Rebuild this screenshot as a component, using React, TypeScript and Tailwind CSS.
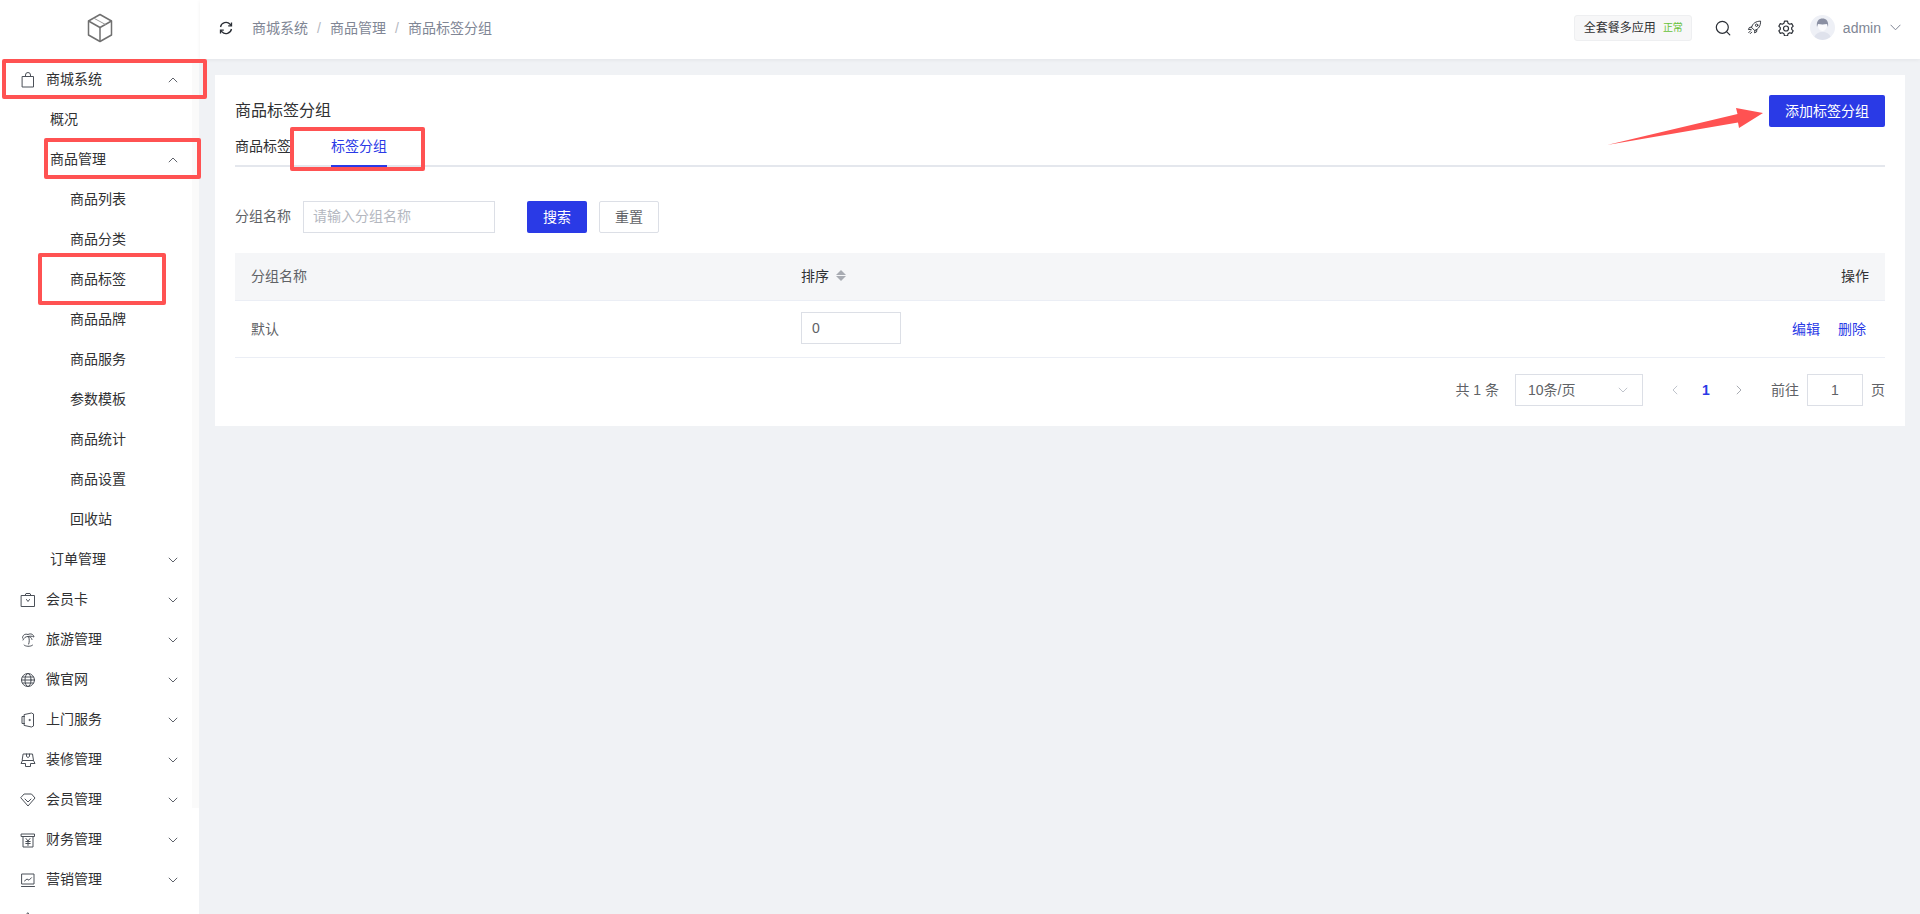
import React from "react";

const FONT = "font-['Liberation_Sans','Noto_Sans_CJK_SC',sans-serif]";

function Chevron({ up = false, className = "" }: { up?: boolean; className?: string }) {
  return (
    <svg width="10" height="6" viewBox="0 0 10 6" fill="none" stroke="currentColor" strokeWidth="1" className={className}>
      <polyline points={up ? "0.8,5.2 5,1 9.2,5.2" : "0.8,0.8 5,5 9.2,0.8"} />
    </svg>
  );
}

function Ico({ children }: { children: React.ReactNode }) {
  return (
    <svg width="16" height="16" viewBox="0 0 16 16" fill="none" stroke="#4b5058" strokeWidth="1" strokeLinejoin="round" strokeLinecap="round">
      {children}
    </svg>
  );
}

const icons: Record<string, React.ReactNode> = {
  bag: (
    <Ico>
      <path d="M2.500 4.500h11v10.500h-11z" />
      <path d="M5.500 4.500V3a2.500 2.500 0 0 1 5 0v1.500" />
    </Ico>
  ),
  card: (
    <Ico>
      <path d="M1.500 3.500h13v11h-13z" />
      <path d="M5 3.500l1-2h4l1 2" />
      <path d="M6.500 7.500l1.500 2 1.500-2" />
    </Ico>
  ),
  palm: (
    <Ico>
      <path d="M2.500 6C2.500 3 5 1.500 8 2.500 11 1 13.500 2.500 14 5c-2-1-4-1-6-.5" />
      <path d="M3 8c.8-2 2.500-3.500 5-3.500 2 .2 3.500 1 4 3" />
      <path d="M8.500 4.500c1 2.500 1 5 .2 7.500" />
      <path d="M4 13c1 1.500 6.500 2 8.500.2" />
    </Ico>
  ),
  globe: (
    <Ico>
      <circle cx="8" cy="8" r="6.500" />
      <ellipse cx="8" cy="8" rx="3" ry="6.500" />
      <path d="M1.500 8h13M2.500 5h11M2.500 11h11" />
    </Ico>
  ),
  door: (
    <Ico>
      <path d="M4.500 2.500l7-1.500 2 1v12l-2 1-7-1.500z" />
      <path d="M4.500 4.500H2v7h2.500" />
      <circle cx="9.500" cy="8" r=".6" />
    </Ico>
  ),
  roller: (
    <Ico>
      <path d="M3.500 2h9l1 6.500h-11z" />
      <path d="M2.500 8.500L1 11.500h4.500v3h5v-3H15l-1.500-3" />
      <path d="M6.500 2v2.500l1.500 1 1.500-1V2" />
    </Ico>
  ),
  gem: (
    <Ico>
      <path d="M4.500 2h7l3.500 4-7 8-7-8z" />
      <path d="M5 7l3 3 3-3" />
    </Ico>
  ),
  money: (
    <Ico>
      <path d="M1.500 2h13v2.500h-13z" />
      <path d="M3 4.500V15h10V4.500" />
      <path d="M6 6.500L8 9l2-2.500M5.800 9.500h4.400M5.800 11.500h4.400M8 9v4.500" />
    </Ico>
  ),
  chart: (
    <Ico>
      <path d="M2 2h12v10H2z" />
      <path d="M1.500 14.500h13" />
      <path d="M4.500 9l2.500-2 2 1.200 2.500-2.500" />
    </Ico>
  ),
  more: (
    <Ico>
      <path d="M8 1l3 4h-6z" />
    </Ico>
  ),
};

type Row = { label: string; level: 0 | 1 | 2; icon?: string; arrow?: "up" | "down" };

const rows: Row[] = [
  { label: "商城系统", level: 0, icon: "bag", arrow: "up" },
  { label: "概况", level: 1 },
  { label: "商品管理", level: 1, arrow: "up" },
  { label: "商品列表", level: 2 },
  { label: "商品分类", level: 2 },
  { label: "商品标签", level: 2 },
  { label: "商品品牌", level: 2 },
  { label: "商品服务", level: 2 },
  { label: "参数模板", level: 2 },
  { label: "商品统计", level: 2 },
  { label: "商品设置", level: 2 },
  { label: "回收站", level: 2 },
  { label: "订单管理", level: 1, arrow: "down" },
  { label: "会员卡", level: 0, icon: "card", arrow: "down" },
  { label: "旅游管理", level: 0, icon: "palm", arrow: "down" },
  { label: "微官网", level: 0, icon: "globe", arrow: "down" },
  { label: "上门服务", level: 0, icon: "door", arrow: "down" },
  { label: "装修管理", level: 0, icon: "roller", arrow: "down" },
  { label: "会员管理", level: 0, icon: "gem", arrow: "down" },
  { label: "财务管理", level: 0, icon: "money", arrow: "down" },
  { label: "营销管理", level: 0, icon: "chart", arrow: "down" },
  { label: "", level: 0, icon: "more" },
];

function MenuRow({ row }: { row: Row }) {
  return (
    <div className="relative flex h-10 shrink-0 items-center text-sm text-[#303133]">
      {row.level === 0 && (
        <>
          <span className="ml-5 flex w-[26px] shrink-0 items-center">{row.icon && icons[row.icon]}</span>
          <span className="pb-[2px]">{row.label}</span>
        </>
      )}
      {row.level === 1 && <span className="ml-[50px] pb-[2px]">{row.label}</span>}
      {row.level === 2 && <span className="ml-[70px] pb-[2px]">{row.label}</span>}
      {row.arrow && (
        <span className="absolute left-[168px] text-[#5f636b]">
          <Chevron up={row.arrow === "up"} className="block" />
        </span>
      )}
    </div>
  );
}

function Sidebar() {
  return (
    <aside className="flex h-full w-[200px] shrink-0 flex-col overflow-hidden bg-white">
      <div className="flex h-[60px] shrink-0 items-center justify-center pb-[4px]">
        <svg width="28" height="30" viewBox="0 0 28 30" fill="none" stroke="#707070" strokeWidth="1.500" strokeLinejoin="round">
          <path d="M14 1.500l11.500 6.500v14L14 28.500 2.500 22V8z" />
          <path d="M2.500 8L14 14.500 25.500 8" />
          <path d="M14 14.500v14" />
          <path d="M7.500 5l12 6.500" strokeWidth="1" stroke="#9a9a9a" />
        </svg>
      </div>
      <div className="flex min-h-0 flex-1">
        <nav className="w-[192px] shrink-0">
          {rows.map((r, i) => (
            <MenuRow key={i} row={r} />
          ))}
        </nav>
        <div className="h-[748px] w-[7px] shrink-0 bg-[#fafafa]" />
        <div className="h-full w-px shrink-0 bg-[#f0f2f5]" />
      </div>
    </aside>
  );
}

function Header() {
  return (
    <header className="relative flex h-[59px] shrink-0 items-center bg-white pb-[4px] pl-[19px] pr-[19px] shadow-[0_1px_4px_rgba(0,21,41,0.06)]">
      <svg width="14" height="14" viewBox="0 0 14 14" fill="none" stroke="#2b2f36" strokeWidth="1.300" className="mr-[19px]">
        <path d="M1.500 6a5.600 5.600 0 0 1 9.600-2.700L12.300 4.700" />
        <path d="M12.500 1.500v3.300H9.200" />
        <path d="M12.500 8a5.600 5.600 0 0 1-9.600 2.700L1.700 9.300" />
        <path d="M1.500 12.500V9.200h3.300" />
      </svg>
      <div className="flex items-center text-sm text-[#808695]">
        <span>商城系统</span>
        <span className="w-[22px] text-center text-[#b5b8bf]">/</span>
        <span>商品管理</span>
        <span className="w-[22px] text-center text-[#b5b8bf]">/</span>
        <span>商品标签分组</span>
      </div>
      <div className="ml-auto flex items-center">
        <div className="flex h-[26px] w-[118px] items-center rounded-[3px] border border-[#eeeff1] bg-[#f7f7f8] pl-[9px]">
          <span className="text-xs text-[#303133]">全套餐多应用</span>
          <span className="ml-[7px] text-[10px] text-[#67c23a]">正常</span>
        </div>
        <svg width="16" height="16" viewBox="0 0 16 16" fill="none" stroke="#2b2f36" strokeWidth="1.200" strokeLinecap="round" className="ml-[23px]">
          <circle cx="7.300" cy="7.300" r="6" />
          <path d="M11.800 11.800l3 3" />
        </svg>
        <svg width="15" height="15" viewBox="0 0 16 16" fill="none" stroke="#2b2f36" strokeWidth="1" strokeLinejoin="round" strokeLinecap="round" className="ml-[16px]">
          <path d="M5 7.500C6 3.500 9.500 1.300 14.500 1.200c0 5-2 8.600-6 9.800z" />
          <path d="M5 7.500L2.500 8l-1 2.200 3-.2M8.500 11l-.5 2.700 2.200-1 .3-2.500" />
          <circle cx="10.300" cy="5.600" r="1.300" />
          <path d="M3.800 11.500l-2 2M5 13l-1.500 1.500" />
        </svg>
        <svg width="16" height="16" viewBox="0 0 16 16" fill="none" stroke="#2b2f36" strokeWidth="1.200" strokeLinejoin="round" className="ml-[16px]">
          <path d="M6.500 1.200h3l.5 2 1.700 1 2-.6 1.500 2.600-1.500 1.500v1.600l1.500 1.500-1.500 2.600-2-.6-1.700 1-.5 2h-3l-.5-2-1.700-1-2 .6L.8 10.800l1.500-1.500V7.700L.8 6.200l1.500-2.600 2 .6 1.700-1z" />
          <circle cx="8" cy="8.500" r="2.500" />
        </svg>
        <svg width="25" height="25" viewBox="0 0 25 25" className="ml-[16px]">
          <circle cx="12.500" cy="12.500" r="12.500" fill="#eef0f6" />
          <path d="M7 12c-1-6 2-8.500 5.500-8.500S19 6 18 12l-1-3c-3 .5-6 .5-9 0z" fill="#8b90a3" />
          <path d="M8 9.500c3 .5 6 .5 9 0 .3 3.500-1.500 6.500-4.500 6.500S7.700 13 8 9.500z" fill="#fbfbfd" />
          <path d="M4.500 22c1-3.500 4-5 8-5s7 1.500 8 5a12.500 12.500 0 0 1-16 0z" fill="#dfe2ec" />
        </svg>
        <span className="ml-[8px] text-sm text-[#808695]">admin</span>
        <span className="ml-[9px] text-[#808695]">
          <svg width="11" height="7" viewBox="0 0 11 7" fill="none" stroke="currentColor" strokeWidth="1" className="block">
            <polyline points="0.600,0.800 5.500,5.800 10.400,0.800" />
          </svg>
        </span>
      </div>
    </header>
  );
}

function Caret() {
  return (
    <span className="ml-[7px] flex flex-col gap-[1px]">
      <span className="h-0 w-0 border-x-[5px] border-b-[5px] border-x-transparent border-b-[#a8abb2]" />
      <span className="h-0 w-0 border-x-[5px] border-t-[5px] border-x-transparent border-t-[#a8abb2]" />
    </span>
  );
}

function Content() {
  return (
    <section className="mx-[15px] mt-4 bg-white px-5 pb-5 pt-5">
      <div className="flex h-8 items-start justify-between">
        <h1 className="text-base leading-8 text-[#303133]">商品标签分组</h1>
        <button className="h-8 w-[116px] rounded-[2px] bg-[#2a3ae6] pb-[1px] text-sm text-white">添加标签分组</button>
      </div>

      <div className="flex h-10 items-center gap-10 border-b-2 border-[#e4e7ed] text-sm">
        <span className="text-[#303133]">商品标签</span>
        <span className="-mb-[2px] flex h-10 items-center border-b-2 border-[#2a3ae6] text-[#2a3ae6]">标签分组</span>
      </div>

      <div className="mt-[34px] flex items-center text-sm">
        <label className="pb-[2px] text-[#606266]">分组名称</label>
        <div className="ml-3 flex h-8 w-[192px] items-center border border-[#dcdfe6] pb-[2px] pl-[9px] text-[#b4b7bf]">请输入分组名称</div>
        <button className="ml-8 h-8 w-[60px] rounded-[2px] bg-[#2a3ae6] text-white">搜索</button>
        <button className="ml-3 h-8 w-[60px] rounded-[2px] border border-[#dcdfe6] bg-white text-[#606266]">重置</button>
      </div>

      <div className="mt-5 text-sm">
        <div className="grid h-[48px] grid-cols-[550px_1fr_auto] items-center border-b border-[#ebeef5] bg-[#f5f6f8] px-4 pb-[2px] text-[#303133]">
          <span className="text-[#606266]">分组名称</span>
          <span className="flex items-center">排序<Caret /></span>
          <span>操作</span>
        </div>
        <div className="grid h-[57px] grid-cols-[550px_1fr_auto] items-center border-b border-[#ebeef5] px-4 text-[#606266]">
          <span>默认</span>
          <span className="-mt-[2px] flex h-8 w-[100px] items-center border border-[#dcdfe6] pl-[10px]">0</span>
          <span className="flex gap-[18px] pr-[3px] text-[#2a3ae6]">
            <span>编辑</span>
            <span>删除</span>
          </span>
        </div>
      </div>

      <div className="mt-4 flex h-8 items-center justify-end text-sm text-[#606266]">
        <span>共 1 条</span>
        <div className="ml-4 flex h-8 w-[128px] items-center justify-between border border-[#dcdfe6] pl-[12px] pr-[14px]">
          <span>10条/页</span>
          <span className="text-[#c0c4cc]"><Chevron className="block" /></span>
        </div>
        <div className="ml-4 flex items-center">
          <span className="flex w-8 justify-center text-[#c0c4cc]">
            <svg width="6" height="10" viewBox="0 0 6 10" fill="none" stroke="currentColor"><polyline points="5.200,0.800 1,5 5.200,9.200" /></svg>
          </span>
          <span className="w-8 pr-[2px] text-center font-bold text-[#2a3ae6]">1</span>
          <span className="flex w-8 justify-center text-[#a8abb2]">
            <svg width="6" height="10" viewBox="0 0 6 10" fill="none" stroke="currentColor"><polyline points="0.800,0.800 5,5 0.800,9.200" /></svg>
          </span>
        </div>
        <span className="ml-4">前往</span>
        <span className="ml-2 flex h-8 w-14 items-center justify-center border border-[#dcdfe6]">1</span>
        <span className="ml-2">页</span>
      </div>
    </section>
  );
}

function Annotations() {
  const box = "pointer-events-none absolute rounded-[2px] border-4 border-[#ff5252]";
  return (
    <>
      <div className={`${box} left-[2px] top-[59px] h-[40px] w-[205px]`} />
      <div className={`${box} left-[44px] top-[138px] h-[41px] w-[157px]`} />
      <div className={`${box} left-[38px] top-[253px] h-[52px] w-[128px]`} />
      <div className={`${box} left-[290px] top-[127px] h-[44px] w-[135px]`} />
      <svg className="pointer-events-none absolute left-[1600px] top-[100px]" width="170" height="50" viewBox="0 0 170 50">
        <polygon points="7,45 137.500,14 136,8 163,13 139,28 138,22.500" fill="#ff5252" />
      </svg>
    </>
  );
}

export default function App() {
  return (
    <div className={`relative flex h-[914px] w-[1920px] overflow-hidden bg-[#f0f2f5] ${FONT}`}>
      <Sidebar />
      <main className="flex min-w-0 flex-1 flex-col">
        <Header />
        <Content />
      </main>
      <Annotations />
    </div>
  );
}
